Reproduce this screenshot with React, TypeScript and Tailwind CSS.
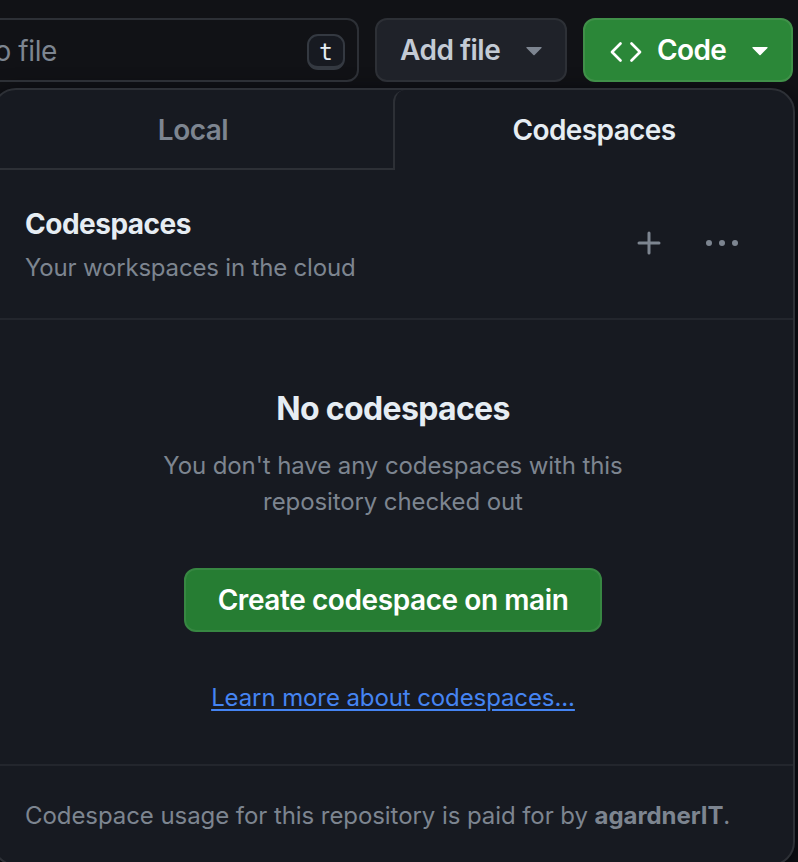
import React from "react";

function Caret({ className }: { className: string }) {
  return (
    <svg width="16" height="9" viewBox="0 0 16 9" className={className} fill="currentColor">
      <path d="M1 0h14c.6 0 .9.7.5 1.1L8.6 8a.8.8 0 0 1-1.2 0L.5 1.100C.1.7.4 0 1 0z" />
    </svg>
  );
}

function Toolbar() {
  return (
    <div className="flex h-[88px] pt-[18px]">
      <div className="-ml-[100px] flex h-16 w-[459px] shrink-0 items-center justify-between rounded-xl border-2 border-[#2d3036] pr-3 pl-[34px]">
        <span className="flex w-[121px] justify-end pt-[2px] text-[28px] leading-none tracking-[-0.4px] whitespace-nowrap text-[#7d8590]">
          Go to file
        </span>
        <kbd className="mt-[3px] flex h-9 w-[38px] items-center justify-center rounded-[11px] border-2 border-b-4 border-[#343941] bg-[#171a21] pt-[3px] font-['DejaVu_Sans_Mono',monospace] text-[23px] leading-none text-[#e6edf3]">
          t
        </kbd>
      </div>
      <button className="ml-4 flex h-16 w-48 items-center justify-between rounded-xl border-2 border-[#2d3036] bg-[#1f2229] pr-[23px] pl-[23px] text-[28px] font-[570] text-[#c3cbd5]">
        <span className="whitespace-nowrap tracking-[-0.5px]">Add file</span>
        <Caret className="mt-[2px] text-[#7d8590]" />
      </button>
      <button className="ml-4 flex h-16 w-[210px] items-center rounded-xl border-2 border-[#409049] bg-[#2b8738] pr-[23px] pl-[25px] text-[28px] font-semibold text-white">
        <svg className="mt-[3px]" width="32" height="22" viewBox="0 0 32 22" fill="none" stroke="currentColor" strokeWidth="2.700" strokeLinecap="round" strokeLinejoin="round">
          <path d="M10.500 2.500 2 11l8.500 8.500M21.500 2.500 30 11l-8.500 8.500" />
        </svg>
        <span className="ml-[15px] whitespace-nowrap tracking-[-0.6px]">Code</span>
        <Caret className="mt-[2px] ml-auto text-white" />
      </button>
    </div>
  );
}

function Tabs() {
  return (
    <div className="flex h-20 text-[28px]">
      <div className="flex w-[399px] items-center justify-center border-b-2 border-[#2d3036] pt-[2px] pr-px font-[570] text-[#7d8590]">
        <span className="tracking-[-0.5px]">Local</span>
      </div>
      <div className="flex flex-1 items-center justify-center rounded-tl-xl border-l-2 border-[#2d3036] font-semibold text-[#e6edf3]">
        <span className="tracking-[-0.6px]">Codespaces</span>
      </div>
    </div>
  );
}

export default function App() {
  return (
    <div className="h-[862px] w-[798px] overflow-hidden bg-[#111216] font-['Inter',sans-serif]">
      <Toolbar />
      <section className="-ml-2 h-[778px] w-[803px] overflow-hidden rounded-3xl border-2 border-[#2d3036] bg-[#171a21] shadow-[0_8px_24px_#010409]">
        <Tabs />
        <header className="flex h-[150px] items-start border-b-2 border-[#23262d] pr-[54px] pl-[31px]">
          <div className="flex-1 pt-9">
            <h2 className="text-[28px] leading-9 font-bold tracking-[-0.5px] text-[#e6edf3]">Codespaces</h2>
            <p className="mt-2 text-[24px] leading-9 tracking-[-0.18px] text-[#7d8590]">Your workspaces in the cloud</p>
          </div>
          <div className="flex items-center pt-[61px] text-[#7d8590]">
            <svg width="24" height="24" viewBox="0 0 24 24" fill="none" stroke="currentColor" strokeWidth="3" strokeLinecap="round">
              <path d="M12 2v20M2 12h20" />
            </svg>
            <svg className="ml-11" width="34" height="8" viewBox="0 0 34 8" fill="currentColor">
              <circle cx="4" cy="4" r="3" />
              <circle cx="17" cy="4" r="3" />
              <circle cx="30" cy="4" r="3" />
            </svg>
          </div>
        </header>
        <main className="flex h-[446px] flex-col items-center border-b-2 border-[#23262d] pt-[65px] pr-px text-center">
          <h3 className="text-[32px] leading-12 font-bold tracking-[-0.65px] text-[#e6edf3]">No codespaces</h3>
          <p className="mt-[15px] text-[24px] leading-9 tracking-[-0.1px] text-[#7d8590]">
            You don't have any codespaces with this
            <br />
            repository checked out
          </p>
          <button className="mt-12 h-16 w-[418px] rounded-xl border-2 border-[#378742] bg-[#267d33] text-[28px] font-semibold tracking-[-0.42px] whitespace-nowrap text-white">
            Create codespace on main
          </button>
          <a className="mt-12 text-[24px] leading-9 tracking-[-0.1px] text-[#4584f2] underline decoration-2 underline-offset-[3px]">
            Learn more about codespaces...
          </a>
        </main>
        <footer className="pt-8 pl-[31px] text-[24px] leading-9 tracking-[-0.07px] whitespace-nowrap text-[#7d8590]">
          Codespace usage for this repository is paid for by <b className="font-bold">agardnerIT</b>.
        </footer>
      </section>
    </div>
  );
}
